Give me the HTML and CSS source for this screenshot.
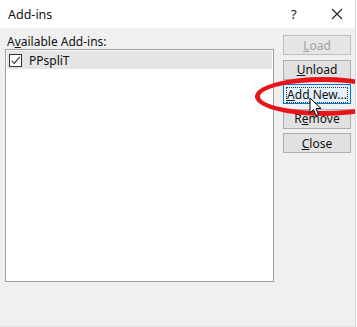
FILE: index.html
```html
<!DOCTYPE html>
<html lang="en">
<head>
    <meta charset="UTF-8">
    <title>Add-ins</title>
    <link rel="stylesheet" href="styles.css">
</head>
<body>
    <div class="dialog">
        <div class="titlebar">
            <span class="title">Add-ins</span>
            <span class="help">?</span>
            <span class="close-x">
                <svg width="12" height="12" viewBox="0 0 12 12"><path d="M1 1 L11 11 M11 1 L1 11" stroke="#222" stroke-width="1.1" fill="none"/></svg>
            </span>
        </div>
        <div class="content">
            <div class="left">
                <div class="label">A<u>v</u>ailable Add-ins:</div>
                <div class="listbox">
                    <div class="row selected">
                        <span class="check">
                            <svg width="11" height="11" viewBox="0 0 11 11"><path d="M1.5 5.5 L4.2 8.4 L9.8 1.8" stroke="#333" stroke-width="1.1" fill="none"/></svg>
                        </span>
                        <span>PPspliT</span>
                    </div>
                </div>
            </div>
            <div class="buttons">
                <button class="btn disabled"><u>L</u>oad</button>
                <button class="btn"><u>U</u>nload</button>
                <button class="btn focused"><span class="focus-box"><u>A</u>dd New...</span></button>
                <button class="btn">R<u>e</u>move</button>
                <button class="btn"><u>C</u>lose</button>
            </div>
        </div>
        <div class="ellipse"></div>
        <svg class="cursor" width="14" height="20" viewBox="0 0 14 20"><path d="M1 1 L1 16 L4.5 12.5 L7 18.5 L9.5 17.5 L7 11.5 L12 11.5 Z" fill="#fff" stroke="#000" stroke-width="1"/></svg>
    </div>
</body>
</html>
```

FILE: styles.css
```css
body {
    margin: 0;
    padding: 0;
    background-color: #fff;
    font-family: "Noto Sans", "Open Sans", Arial, sans-serif;
    font-size: 12px;
    color: #111;
}
.dialog {
    position: relative;
    width: 355px;
    height: 326px;
    border-right: 1px solid #d8d8d8;
    border-bottom: 1px solid #e2e2e2;
    overflow: hidden;
    background-color: #f0f0f0;
}
.titlebar {
    height: 28px;
    background-color: #fff;
    display: flex;
    align-items: center;
    padding-left: 8px;
}
.title {
    font-size: 12.5px;
    flex: 1;
}
.help {
    font-size: 13px;
    width: 20px;
    margin-right: 20px;
}
.close-x {
    width: 24px;
    display: flex;
    align-items: center;
}
.content {
    display: flex;
    padding: 6px 4px 0 5px;
}
.left {
    width: 269px;
}
.label {
    height: 15px;
    line-height: 15px;
    padding-left: 2px;
}
.listbox {
    height: 229px;
    background-color: #fff;
    border: 1px solid #a0a0a0;
    padding: 1px;
}
.row {
    height: 18px;
    display: flex;
    align-items: center;
    padding-left: 2px;
}
.row.selected {
    background-color: #e5e5e5;
}
.check {
    width: 11px;
    height: 11px;
    border: 1px solid #333;
    background-color: #fff;
    margin-right: 7px;
    display: flex;
}
.buttons {
    display: flex;
    flex-direction: column;
    gap: 4.5px;
    margin-left: 9px;
    margin-top: 1px;
}
.btn {
    width: 68px;
    height: 20px;
    padding: 0;
    border: 1px solid #adadad;
    background-color: #e1e1e1;
    font-family: "Noto Sans", "Open Sans", Arial, sans-serif;
    font-size: 12px;
    color: #111;
}
.btn.disabled {
    color: #a0a0a0;
    border-color: #bfbfbf;
    background-color: #e6e6e6;
}
.btn.focused {
    border-color: #0078d7;
    background-color: #e5f1fb;
    padding: 2px;
}
.focus-box {
    display: block;
    height: 14px;
    line-height: 14px;
    border: 1px dotted #333;
}
.ellipse {
    position: absolute;
    left: 255px;
    top: 77px;
    width: 126px;
    height: 29px;
    border: 5px solid #e8141b;
    border-radius: 50%;
}
.cursor {
    position: absolute;
    left: 309px;
    top: 97px;
}
```
